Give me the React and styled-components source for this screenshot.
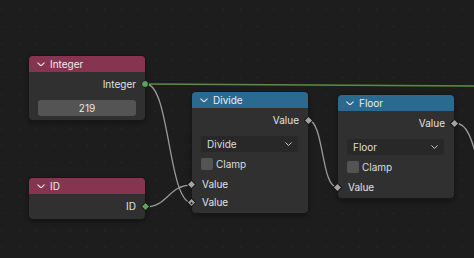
import React from 'react';
import styled, { createGlobalStyle } from 'styled-components';

const Global = createGlobalStyle`
  html, body { margin: 0; padding: 0; background: #1d1d1d; }
  * { box-sizing: border-box; }
`;

const Canvas = styled.div`
  position: relative;
  width: 474px;
  height: 258px;
  overflow: hidden;
  background-color: #1d1d1d;
  background-image: radial-gradient(circle, #222222 1px, transparent 1.2px);
  background-size: 17px 17px;
  background-position: -6px 1px;
  font-family: Inter, "DejaVu Sans", sans-serif;
  font-size: 10px;
  color: #e2e2e2;
`;

const Links = styled.svg`
  position: absolute;
  left: 0;
  top: 0;
  width: 474px;
  height: 258px;
`;

const Node = styled.div`
  position: absolute;
  left: ${p => p.$x}px;
  top: ${p => p.$y}px;
  width: 116px;
  background: #303030;
  border-radius: 4px;
  box-shadow: 0 0 0 1px #171717, 0 2px 5px rgba(0, 0, 0, 0.45);
  display: flex;
  flex-direction: column;
`;

const Header = styled.div`
  height: 16px;
  background: ${p => p.$color};
  border-radius: 4px 4px 0 0;
  display: flex;
  align-items: center;
  gap: 5px;
  padding-left: 8px;
  color: #ececec;
`;

const Body = styled.div`
  display: flex;
  flex-direction: column;
  padding: 3px 0 4px;
`;

const Inputs = styled.div`
  display: flex;
  flex-direction: column;
  margin: 2px 0 -2px;
`;

const Row = styled.div`
  position: relative;
  height: 18px;
  display: flex;
  align-items: center;
  justify-content: ${p => (p.$out ? 'flex-end' : 'flex-start')};
  padding: 0 9px 0 10px;
`;

const Socket = styled.span`
  position: absolute;
  top: 50%;
  ${p => (p.$out ? 'right: -4px;' : 'left: -4px;')}
  width: ${p => (p.$round ? 8 : 7)}px;
  height: ${p => (p.$round ? 8 : 7)}px;
  margin-top: ${p => (p.$round ? -4 : -3.5)}px;
  background: ${p => p.$color};
  border: 1px solid #151515;
  border-radius: ${p => (p.$round ? '50%' : '1px')};
  transform: ${p => (p.$round ? 'none' : 'rotate(45deg)')};
  display: flex;
  align-items: center;
  justify-content: center;
  &::after {
    content: '';
    display: ${p => (p.$dot ? 'block' : 'none')};
    width: 2px;
    height: 2px;
    background: #2a2a2a;
  }
`;

const ValueField = styled.div`
  margin: 7px 9px 0;
  height: 16px;
  border-radius: 3px;
  background: #545454;
  display: flex;
  align-items: center;
  justify-content: center;
  color: #e8e8e8;
`;

const Dropdown = styled.div`
  margin: 7px 10px 0 9px;
  height: 16px;
  border-radius: 3px;
  background: #282828;
  display: flex;
  align-items: center;
  justify-content: space-between;
  padding: 0 6px;
  color: #dedede;
`;

const CheckRow = styled.div`
  margin-top: 3px;
  height: 18px;
  display: flex;
  align-items: center;
  gap: 3px;
  padding-left: 9px;
  color: #dedede;
`;

const CheckBox = styled.span`
  width: 12px;
  height: 12px;
  border-radius: 2px;
  background: #545454;
`;

const Chevron = ({ size = 8, color = '#e6e6e6' }) => (
  <svg width={size} height={size * 0.6} viewBox="0 0 10 6">
    <path d="M1 1 L5 5 L9 1" fill="none" stroke={color} strokeWidth="1.4" strokeLinecap="round" strokeLinejoin="round" />
  </svg>
);

const INT = '#5fa05d';
const FLOAT = '#a3a3a3';
const INPUT_RED = '#873450';
const CONVERTER_BLUE = '#2a6a90';

export default function App() {
  return (
    <Canvas>
      <Global />
      <Links viewBox="0 0 474 258">
        <path d="M146 84 L474 86" stroke="#5d8c48" strokeWidth="1.6" fill="none" />
        <path d="M146 84 C170 84, 168 203, 192 203" stroke="#9c9c9c" strokeWidth="1.3" fill="none" />
        <path d="M145 207 C168 207, 168 185, 192 185" stroke="#9a9a9a" strokeWidth="1.3" fill="none" />
        <path d="M308 120 C324 120, 321 187, 337 187" stroke="#9c9c9c" strokeWidth="1.3" fill="none" />
        <path d="M455 123 C468 123, 472 140, 482 175" stroke="#9c9c9c" strokeWidth="1.3" fill="none" />
      </Links>

      <Node $x={29} $y={56}>
        <Header $color={INPUT_RED}>
          <Chevron />
          Integer
        </Header>
        <Body>
          <Row $out>
            Integer
            <Socket $out $round $color={INT} />
          </Row>
          <ValueField>219</ValueField>
        </Body>
      </Node>

      <Node $x={29} $y={178}>
        <Header $color={INPUT_RED}>
          <Chevron />
          ID
        </Header>
        <Body>
          <Row $out>
            ID
            <Socket $out $color={INT} />
          </Row>
        </Body>
      </Node>

      <Node $x={192} $y={92}>
        <Header $color={CONVERTER_BLUE}>
          <Chevron />
          Divide
        </Header>
        <Body>
          <Row $out>
            Value
            <Socket $out $color={FLOAT} />
          </Row>
          <Dropdown>
            Divide
            <Chevron size={7} color="#cfcfcf" />
          </Dropdown>
          <CheckRow>
            <CheckBox />
            Clamp
          </CheckRow>
          <Inputs>
            <Row>
              <Socket $color={FLOAT} />
              Value
            </Row>
            <Row>
              <Socket $color={FLOAT} $dot />
              Value
            </Row>
          </Inputs>
        </Body>
      </Node>

      <Node $x={338} $y={95}>
        <Header $color={CONVERTER_BLUE}>
          <Chevron />
          Floor
        </Header>
        <Body>
          <Row $out>
            Value
            <Socket $out $color={FLOAT} />
          </Row>
          <Dropdown>
            Floor
            <Chevron size={7} color="#cfcfcf" />
          </Dropdown>
          <CheckRow>
            <CheckBox />
            Clamp
          </CheckRow>
          <Inputs>
            <Row>
              <Socket $color={FLOAT} />
              Value
            </Row>
          </Inputs>
        </Body>
      </Node>
    </Canvas>
  );
}
